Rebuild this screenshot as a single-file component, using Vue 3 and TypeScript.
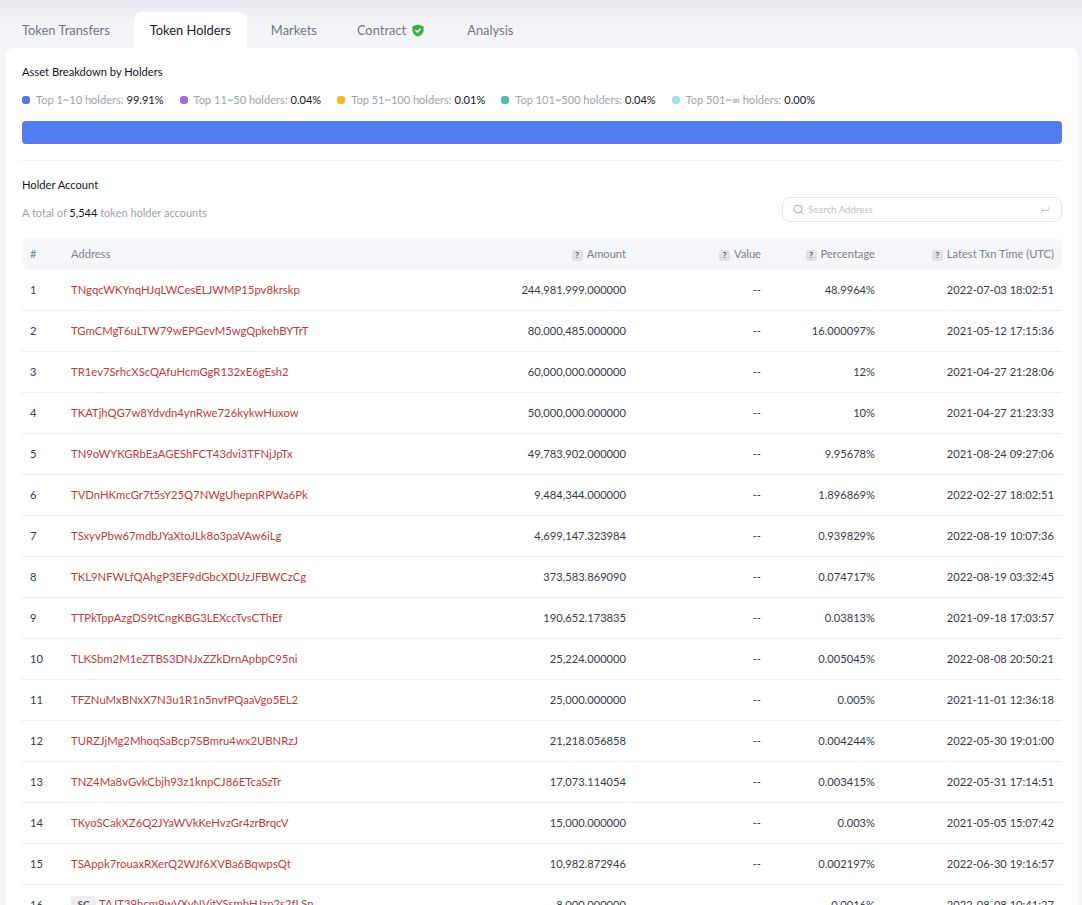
<script setup lang="ts">
interface Holder {
  address: string
  amount: string
  percent: string
  time: string
  contract?: boolean
}

const tabs = ['Token Transfers', 'Token Holders', 'Markets', 'Contract', 'Analysis']

const legend = [
  { label: 'Top 1~10 holders:', value: '99.91%', color: '#4f7cf3' },
  { label: 'Top 11~50 holders:', value: '0.04%', color: '#9b6fd6' },
  { label: 'Top 51~100 holders:', value: '0.01%', color: '#f5b91e' },
  { label: 'Top 101~500 holders:', value: '0.04%', color: '#4cbfa2' },
  { label: 'Top 501~∞ holders:', value: '0.00%', color: '#9ae6e9' },
]

const holders: Holder[] = [
  { address: 'TNgqcWKYnqHJqLWCesELJWMP15pv8krskp', amount: '244,981,999.000000', percent: '48.9964%', time: '2022-07-03 18:02:51' },
  { address: 'TGmCMgT6uLTW79wEPGevM5wgQpkehBYTrT', amount: '80,000,485.000000', percent: '16.000097%', time: '2021-05-12 17:15:36' },
  { address: 'TR1ev7SrhcXScQAfuHcmGgR132xE6gEsh2', amount: '60,000,000.000000', percent: '12%', time: '2021-04-27 21:28:06' },
  { address: 'TKATjhQG7w8Ydvdn4ynRwe726kykwHuxow', amount: '50,000,000.000000', percent: '10%', time: '2021-04-27 21:23:33' },
  { address: 'TN9oWYKGRbEaAGEShFCT43dvi3TFNjJpTx', amount: '49,783,902.000000', percent: '9.95678%', time: '2021-08-24 09:27:06' },
  { address: 'TVDnHKmcGr7t5sY25Q7NWgUhepnRPWa6Pk', amount: '9,484,344.000000', percent: '1.896869%', time: '2022-02-27 18:02:51' },
  { address: 'TSxyvPbw67mdbJYaXtoJLk8o3paVAw6iLg', amount: '4,699,147.323984', percent: '0.939829%', time: '2022-08-19 10:07:36' },
  { address: 'TKL9NFWLfQAhgP3EF9dGbcXDUzJFBWCzCg', amount: '373,583.869090', percent: '0.074717%', time: '2022-08-19 03:32:45' },
  { address: 'TTPkTppAzgDS9tCngKBG3LEXccTvsCThEf', amount: '190,652.173835', percent: '0.03813%', time: '2021-09-18 17:03:57' },
  { address: 'TLKSbm2M1eZTBS3DNJxZZkDrnApbpC95ni', amount: '25,224.000000', percent: '0.005045%', time: '2022-08-08 20:50:21' },
  { address: 'TFZNuMxBNxX7N3u1R1n5nvfPQaaVgo5EL2', amount: '25,000.000000', percent: '0.005%', time: '2021-11-01 12:36:18' },
  { address: 'TURZJjMg2MhoqSaBcp7SBmru4wx2UBNRzJ', amount: '21,218.056858', percent: '0.004244%', time: '2022-05-30 19:01:00' },
  { address: 'TNZ4Ma8vGvkCbjh93z1knpCJ86ETcaSzTr', amount: '17,073.114054', percent: '0.003415%', time: '2022-05-31 17:14:51' },
  { address: 'TKyoSCakXZ6Q2JYaWVkKeHvzGr4zrBrqcV', amount: '15,000.000000', percent: '0.003%', time: '2021-05-05 15:07:42' },
  { address: 'TSAppk7rouaxRXerQ2WJf6XVBa6BqwpsQt', amount: '10,982.872946', percent: '0.002197%', time: '2022-06-30 19:16:57' },
  { address: 'TAJT39hcm9wVXvNVjtYSsmbHJzp2s2fLSn', amount: '8,000.000000', percent: '0.0016%', time: '2022-08-08 10:41:27', contract: true },
]
</script>

<template>
  <div class="page">
    <nav class="tabs">
      <div v-for="tab in tabs" :key="tab" class="tab" :class="{ active: tab === 'Token Holders' }">
        {{ tab }}
        <svg v-if="tab === 'Contract'" class="shield" width="12" height="13" viewBox="0 0 13 14">
          <path d="M6.5 0.5 L12.5 2.4 V7 C12.5 10.2 9.6 12.6 6.5 13.6 C3.4 12.6 0.5 10.2 0.5 7 V2.4 Z" fill="#3cb043" />
          <path d="M3.7 6.6 L5.8 8.6 L9.4 5" fill="none" stroke="#fff" stroke-width="1.5" />
        </svg>
      </div>
    </nav>

    <main class="card">
      <h3 class="title">Asset Breakdown by Holders</h3>
      <ul class="legend">
        <li v-for="item in legend" :key="item.label">
          <i class="dot" :style="{ background: item.color }"></i>
          <span class="muted">{{ item.label }}</span>
          <span class="value">{{ item.value }}</span>
        </li>
      </ul>
      <div class="bar"></div>
      <hr class="divider" />

      <div class="holder-head">
        <div>
          <h3 class="title">Holder Account</h3>
          <p class="total">A total of <span class="value">5,544</span> token holder accounts</p>
        </div>
        <div class="search">
          <svg width="11" height="11" viewBox="0 0 11 11" fill="none" stroke="#a9aeb8" stroke-width="1">
            <circle cx="5" cy="5" r="4" />
            <path d="M8 8 L10.3 10.3" />
          </svg>
          <span class="placeholder">Search Address</span>
          <svg class="enter" width="10" height="9" viewBox="0 0 10 9" fill="none" stroke="#c3c7ce" stroke-width="1">
            <path d="M9 0.5 V5.5 H1.5" />
            <path d="M3.5 3.5 L1.5 5.5 L3.5 7.5" />
          </svg>
        </div>
      </div>

      <table class="table">
        <thead>
          <tr>
            <th class="c-rank">#</th>
            <th class="c-address">Address</th>
            <th class="c-amount num"><i class="help">?</i>Amount</th>
            <th class="c-value num"><i class="help">?</i>Value</th>
            <th class="c-percent num"><i class="help">?</i>Percentage</th>
            <th class="c-time num"><i class="help">?</i>Latest Txn Time (UTC)</th>
          </tr>
        </thead>
        <tbody>
          <tr v-for="(row, i) in holders" :key="row.address">
            <td class="c-rank">{{ i + 1 }}</td>
            <td class="c-address">
              <span v-if="row.contract" class="sc">SC</span>
              <a class="link">{{ row.address }}</a>
            </td>
            <td class="num">{{ row.amount }}</td>
            <td class="num">--</td>
            <td class="num">{{ row.percent }}</td>
            <td class="num">{{ row.time }}</td>
          </tr>
        </tbody>
      </table>
    </main>
  </div>
</template>

<style>
html,
body {
  margin: 0;
  height: 100%;
  overflow: hidden;
  background: #f3f5f9;
}
</style>

<style scoped>
.page {
  height: 905px;
  overflow: hidden;
  box-sizing: border-box;
  padding: 12px 4px 0 6px;
  font-family: Lato, 'Liberation Sans', sans-serif;
  font-size: 11.15px;
  color: #383b45;
  background: linear-gradient(#e9ebf0 0, #f3f5f9 30px);
}

.tabs {
  display: flex;
  height: 36px;
}

.tab {
  display: flex;
  align-items: center;
  gap: 6px;
  padding: 0 16px 1px;
  margin-right: 8px;
  font-size: 12.9px;
  color: #727782;
  border-radius: 8px 8px 0 0;
}

.tab.active {
  background: #fff;
  color: #1d2027;
}

.shield {
  margin: 1px 3px 0 0;
}

.card {
  background: #fff;
  border-radius: 8px 8px 0 0;
  padding: 16px;
  height: 100%;
}

.title {
  margin: 0;
  font-size: 11.15px;
  line-height: 16px;
  font-weight: 400;
  color: #14161c;
}

.legend {
  display: flex;
  gap: 16px;
  list-style: none;
  margin: 12px 0 0;
  padding: 0;
  font-size: 11.06px;
  line-height: 16px;
  height: 16px;
}

.legend li {
  display: flex;
  align-items: center;
}

.dot {
  width: 8px;
  height: 8px;
  border-radius: 3px;
  margin-right: 6px;
}

.muted {
  color: #9ea3ad;
  margin-right: 3px;
}

.value {
  color: #14161c;
}

.bar {
  height: 23px;
  margin-top: 13px;
  border-radius: 4px;
  background: #517cf2;
}

.divider {
  border: 0;
  border-top: 1px solid #eef0f3;
  margin: 16px 0 0;
}

.holder-head {
  display: flex;
  justify-content: space-between;
  align-items: flex-end;
  margin-top: 16px;
}

.total {
  margin: 12px 0 0;
  font-size: 11px;
  line-height: 16px;
  color: #9ea3ad;
}

.search {
  display: flex;
  align-items: center;
  width: 280px;
  height: 25px;
  box-sizing: border-box;
  padding: 0 11px 0 10px;
  border: 1px solid #e4e6ea;
  border-radius: 8px;
  gap: 4px;
  margin-bottom: -1px;
}

.placeholder {
  flex: 1;
  font-size: 9.7px;
  line-height: 11px;
  margin-top: -1px;
  color: #bdc1c8;
}

.table {
  width: 1040px;
  margin-top: 17px;
  border-collapse: separate;
  border-spacing: 0;
  table-layout: fixed;
}

.table th {
  box-sizing: border-box;
  height: 32px;
  padding: 0 8px;
  font-size: 11.15px;
  font-weight: 400;
  line-height: 20px;
  text-align: left;
  color: #7d828d;
  background: #f4f6fa;
}

.table th:first-child {
  border-radius: 8px 0 0 8px;
}

.table th:last-child {
  border-radius: 0 8px 8px 0;
}

.table td {
  box-sizing: border-box;
  height: 41px;
  padding: 0 8px 2px;
  border-bottom: 1px solid #eceef1;
  white-space: nowrap;
  overflow: hidden;
}

.table .num {
  text-align: right;
}

.c-rank {
  width: 41px;
}

.c-address {
  width: 280px;
}

.c-amount {
  width: 291px;
}

.c-value {
  width: 135px;
}

.c-percent {
  width: 114px;
}

.c-time {
  width: 179px;
}

.help {
  display: inline-block;
  width: 11px;
  height: 11px;
  margin-right: 4px;
  border-radius: 3px;
  background: #dfe1e5;
  color: #555;
  font-style: normal;
  font-size: 8px;
  font-weight: 700;
  line-height: 11px;
  text-align: center;
}

.link {
  font-size: 11.3px;
  color: #c03a3c;
}

.sc {
  display: inline-block;
  width: 25px;
  height: 16px;
  margin-right: 3px;
  border-radius: 4px;
  background: #ebedf0;
  font-size: 10px;
  font-weight: 700;
  line-height: 16px;
  text-align: center;
  color: #555;
}
</style>
